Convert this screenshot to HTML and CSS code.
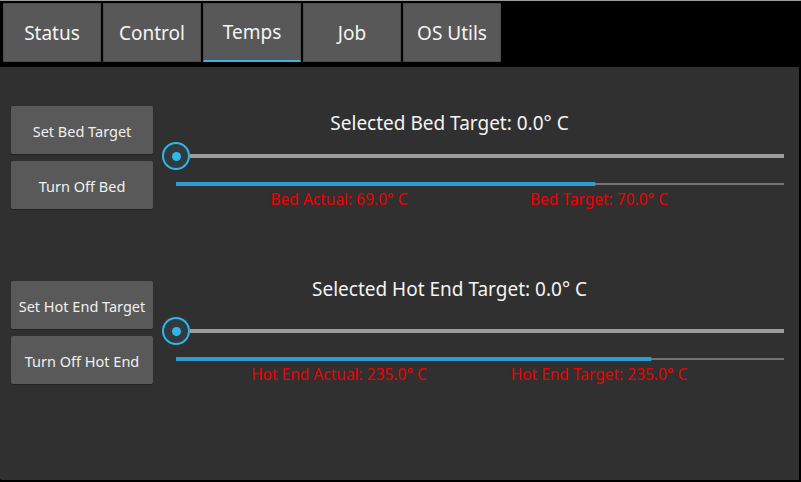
FILE: index.html
```html
<!DOCTYPE html>
<html>
<head>
<meta charset="utf-8">
<link rel="stylesheet" href="styles.css">
</head>
<body>
<div class="app">
  <nav class="tabbar">
    <div class="tab">Status</div>
    <div class="tab">Control</div>
    <div class="tab active">Temps</div>
    <div class="tab">Job</div>
    <div class="tab">OS Utils</div>
  </nav>
  <main class="panel">
    <section class="section">
      <div class="buttons">
        <div class="btn">Set Bed Target</div>
        <div class="btn">Turn Off Bed</div>
      </div>
      <div class="controls">
        <div class="title-row"><div class="title title-bed">Selected Bed Target: 0.0° C</div></div>
        <div class="slider">
          <div class="thumb"><div class="dot"></div></div>
          <div class="track"></div>
        </div>
        <div class="progress">
          <div class="fill" style="width:69%"></div>
          <div class="rest"></div>
        </div>
        <div class="labels">
          <div class="label">Bed Actual: 69.0° C</div>
          <div class="label">Bed Target: 70.0° C</div>
        </div>
      </div>
    </section>
    <section class="section section-hot">
      <div class="buttons">
        <div class="btn">Set Hot End Target</div>
        <div class="btn">Turn Off Hot End</div>
      </div>
      <div class="controls">
        <div class="title-row"><div class="title title-hot">Selected Hot End Target: 0.0° C</div></div>
        <div class="slider">
          <div class="thumb"><div class="dot"></div></div>
          <div class="track"></div>
        </div>
        <div class="progress">
          <div class="fill" style="width:78.33%"></div>
          <div class="rest"></div>
        </div>
        <div class="labels">
          <div class="label">Hot End Actual: 235.0° C</div>
          <div class="label">Hot End Target: 235.0° C</div>
        </div>
      </div>
    </section>
  </main>
</div>
</body>
</html>
```
FILE: styles.css
```css
html, body {
  margin: 0;
  padding: 0;
  background: #000;
}
body {
  font-family: "Noto Sans", "Open Sans", sans-serif;
  color: #f2f2f2;
  width: 801px;
  height: 482px;
  overflow: hidden;
}
.app {
  width: 801px;
}
.tabbar {
  height: 67px;
  box-sizing: border-box;
  border-top: 1px solid #9c9c9c;
  padding: 2px 0 0 3px;
  display: flex;
  gap: 2px;
  align-items: flex-start;
}
.tab {
  width: 98px;
  height: 59px;
  box-sizing: border-box;
  background: #585858;
  border: 1px solid #4c4c4c;
  display: flex;
  align-items: center;
  justify-content: center;
  font-size: 19px;
  color: #f4f4f4;
}
.tab.active {
  border-bottom: 2px solid #33b5e5;
}
.panel {
  width: 799px;
  height: 413px;
  box-sizing: border-box;
  background: #303030;
  padding: 39px 0 0 11px;
  border-bottom-left-radius: 2px;
}
.section {
  display: flex;
  gap: 9px;
  align-items: flex-start;
}
.section-hot {
  margin-top: 72px;
}
.buttons {
  width: 142px;
  display: flex;
  flex-direction: column;
  gap: 7px;
}
.btn {
  height: 48px;
  background: #595959;
  border-radius: 2px;
  display: flex;
  align-items: center;
  justify-content: center;
  font-size: 14.5px;
  color: #f0f0f0;
  box-shadow: 0 1px 1px rgba(0,0,0,0.3);
  white-space: nowrap;
  padding-top: 1px;
  box-sizing: border-box;
}
.controls {
  width: 622px;
  display: flex;
  flex-direction: column;
}
.title-row {
  height: 36px;
}
.title {
  font-size: 19px;
  line-height: 20px;
  text-align: center;
  padding-right: 47px;
  color: #f4f4f4;
  white-space: nowrap;
}
.title-bed {
  margin-top: 7px;
}
.title-hot {
  margin-top: -2px;
}
.slider {
  height: 28px;
  display: flex;
  align-items: center;
}
.thumb {
  width: 28px;
  height: 28px;
  box-sizing: border-box;
  border: 2px solid #33b5e5;
  border-radius: 50%;
  background: #2f3a41;
  display: flex;
  align-items: center;
  justify-content: center;
  flex: none;
}
.dot {
  width: 9px;
  height: 9px;
  border-radius: 50%;
  background: #33b5e5;
}
.track {
  flex: 1;
  height: 4px;
  background: #9b9b9b;
}
.progress {
  margin: 12px 0 0 14px;
  width: 608px;
  height: 4px;
  display: flex;
  align-items: center;
}
.fill {
  height: 4px;
  background: #2c9fd0;
  border-radius: 0 2px 2px 0;
}
.rest {
  flex: 1;
  height: 2px;
  background: #737373;
}
.labels {
  margin-top: 4px;
  padding-left: 47px;
  display: flex;
}
.label {
  width: 260px;
  text-align: center;
  font-size: 15.5px;
  line-height: 18px;
  color: #ee0000;
  white-space: nowrap;
}
```
